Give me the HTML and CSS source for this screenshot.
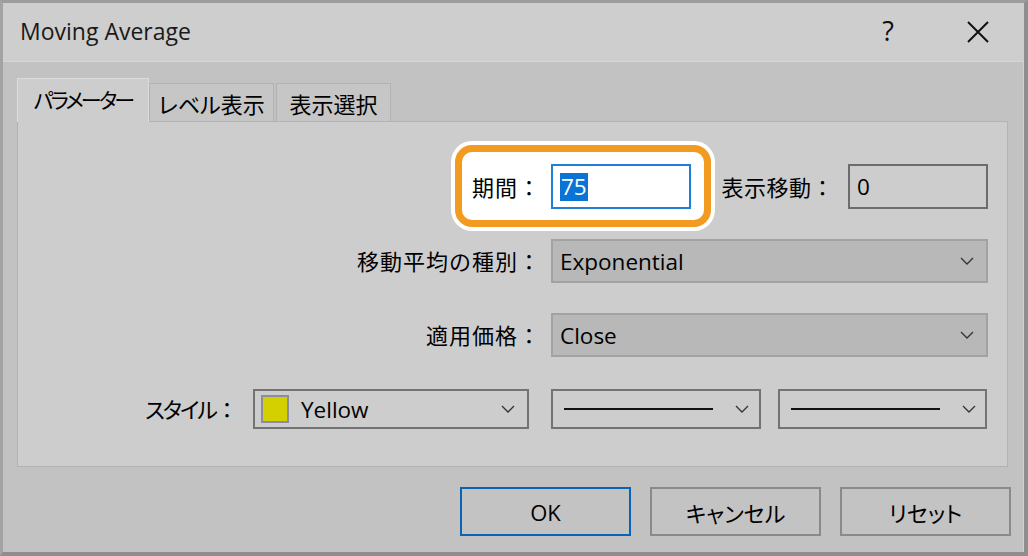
FILE: index.html
```html
<!DOCTYPE html>
<html lang="ja">
<head>
<meta charset="utf-8">
<title>Moving Average</title>
<link rel="stylesheet" href="styles.css">
</head>
<body>
<div class="window">
  <div class="titlebar">
    <div class="title">Moving Average</div>
    <div class="title-btns">
      <span class="help">?</span>
      <svg class="close" width="24" height="24" viewBox="0 0 24 24"><path d="M2 2 L22 22 M22 2 L2 22" stroke="#111" stroke-width="2" fill="none"/></svg>
    </div>
  </div>
  <div class="client">
    <div class="tabs">
      <div class="tab active">パラメーター</div>
      <div class="tab">レベル表示</div>
      <div class="tab">表示選択</div>
    </div>
    <div class="panel">
      <div class="highlight"></div>
      <div class="grid">
        <div class="label">期間：</div>
        <div class="ctrl-row">
          <div class="input focus"><span class="sel">75</span></div>
          <div class="label shift">表示移動：</div>
          <div class="input plain">0</div>
        </div>
        <div class="label">移動平均の種別：</div>
        <div class="combo">
          <span>Exponential</span>
          <svg class="chev" width="14" height="8" viewBox="0 0 14 8"><path d="M1 1 L7 7 L13 1" stroke="#333" stroke-width="1.3" fill="none"/></svg>
        </div>
        <div class="label">適用価格：</div>
        <div class="combo">
          <span>Close</span>
          <svg class="chev" width="14" height="8" viewBox="0 0 14 8"><path d="M1 1 L7 7 L13 1" stroke="#333" stroke-width="1.3" fill="none"/></svg>
        </div>
      </div>
      <div class="style-row">
        <div class="label"><span class="kana">スタイル</span>：</div>
        <div class="box color">
          <span class="swatch"></span>
          <span class="cname">Yellow</span>
          <svg class="chev" width="14" height="8" viewBox="0 0 14 8"><path d="M1 1 L7 7 L13 1" stroke="#333" stroke-width="1.3" fill="none"/></svg>
        </div>
        <div class="box line">
          <span class="stroke"></span>
          <svg class="chev" width="14" height="8" viewBox="0 0 14 8"><path d="M1 1 L7 7 L13 1" stroke="#333" stroke-width="1.3" fill="none"/></svg>
        </div>
        <div class="box line w">
          <span class="stroke"></span>
          <svg class="chev" width="14" height="8" viewBox="0 0 14 8"><path d="M1 1 L7 7 L13 1" stroke="#333" stroke-width="1.3" fill="none"/></svg>
        </div>
      </div>
    </div>
    <div class="buttons">
      <div class="btn default">OK</div>
      <div class="btn">キャンセル</div>
      <div class="btn">リセット</div>
    </div>
  </div>
</div>
</body>
</html>
```

FILE: styles.css
```css
* { box-sizing: border-box; }
html, body { margin: 0; padding: 0; }
body {
  width: 1028px;
  height: 556px;
  overflow: hidden;
  font-family: "Open Sans", "Noto Sans CJK JP", sans-serif;
  color: #000;
}
.window {
  width: 1028px;
  height: 556px;
  border-style: solid;
  border-color: #9c9c9c #8e8e8e #8e8e8e #a3a3a3;
  border-width: 3px 4px 4px 3px;
  background: #c2c2c2;
  display: flex;
  flex-direction: column;
}
.titlebar {
  height: 59px;
  background: #cecece;
  display: flex;
  align-items: center;
  justify-content: space-between;
  padding: 0 34px 0 17px;
  border-bottom: 1px solid #d6d6d6;
}
.title {
  font-size: 23px;
  color: #1a1a1a;
  padding-bottom: 2px;
}
.title-btns {
  display: flex;
  align-items: center;
  gap: 72px;
}
.help {
  font-size: 27px;
  font-family: "Open Sans", sans-serif;
  color: #111;
  padding-bottom: 4px;
}
.close { display: block; }
.client {
  flex: 1;
  padding: 16px 12px 15px 14px;
  display: flex;
  flex-direction: column;
  border-right: 1px solid #d2d2d2;
}
.tabs {
  display: flex;
  align-items: flex-end;
  height: 43px;
  position: relative;
  z-index: 2;
}
.tab {
  height: 38px;
  padding: 0;
  font-size: 22px;
  font-feature-settings: "palt";
  white-space: nowrap;
  display: flex;
  align-items: center;
  justify-content: center;
  background: #c6c6c6;
  border: 1px solid #b2b2b2;
  border-bottom: none;
  margin-right: 2px;
}
.tab:nth-child(2) { width: 125px; margin-right: 2px; }
.tab:nth-child(3) { width: 115px; }
.tab.active {
  width: 132px;
  height: 44px;
  margin-bottom: -1px;
  margin-right: 0;
  background: #cdcdcd;
  border-color: #dcdcdc;
  padding-bottom: 4px;
  font-size: 21px;
  letter-spacing: -2.8px;
}
.panel {
  width: 991px;
  height: 346px;
  background: #cdcdcd;
  border: 1px solid #b3b3b3;
  position: relative;
  padding: 42px 19px 0 0;
}
.highlight {
  position: absolute;
  left: 437px;
  top: 23px;
  width: 256px;
  height: 82px;
  background: #fff;
  border: 7px solid #f39b20;
  border-radius: 17px;
  box-shadow: 0 0 0 4px #fff;
  z-index: 0;
}
.grid {
  position: relative;
  z-index: 1;
  display: grid;
  grid-template-columns: 1fr 437px;
  grid-template-rows: 45px 44px 44px;
  column-gap: 10px;
  row-gap: 30px;
  align-items: center;
}
.label {
  font-size: 22px;
  letter-spacing: 1px;
  text-align: right;
  white-space: nowrap;
  line-height: 1;
}
.kana {
  font-feature-settings: "palt";
  letter-spacing: -2px;
}
.ctrl-row {
  display: flex;
  align-items: center;
  height: 45px;
}
.input {
  width: 140px;
  height: 45px;
  display: flex;
  align-items: center;
  padding-left: 7px;
  font-size: 22.5px;
}
.input.focus {
  background: #fff;
  border: 2px solid #1f7fd6;
}
.sel {
  background: #0a74d6;
  color: #fff;
  line-height: 28px;
  padding: 0 1px;
}
.input.plain {
  border: 2px solid #6c6c6c;
  background: #cdcdcd;
}
.label.shift {
  margin-left: auto;
  margin-right: 14px;
  letter-spacing: 0.5px;
}
.combo {
  height: 44px;
  background: #b8b8b8;
  border: 2px solid #a2a2a2;
  display: flex;
  align-items: center;
  justify-content: space-between;
  padding: 0 12px 0 7px;
  font-size: 22.5px;
}
.chev { display: block; flex: none; }
.style-row {
  position: relative;
  z-index: 1;
  display: flex;
  align-items: center;
  justify-content: flex-end;
  margin-top: 32px;
  height: 40px;
  padding-right: 1px;
}
.style-row .label { margin-right: 14px; }
.box {
  height: 40px;
  border: 2px solid #737373;
  background: #cdcdcd;
  display: flex;
  align-items: center;
  padding: 0 12px 0 6px;
}
.box.color { width: 276px; margin-right: 22px; }
.box.line { width: 210px; margin-right: 17px; padding-left: 11px; gap: 22px; }
.box.line.w { width: 209px; margin-right: 0; }
.swatch {
  width: 28px;
  height: 28px;
  background: #d4d000;
  border: 2px solid #8c8ca0;
  flex: none;
}
.cname {
  font-size: 22.5px;
  margin-left: 12px;
  flex: 1;
}
.stroke {
  height: 2px;
  background: #111;
  width: 149px;
  flex: none;
}
.buttons {
  display: flex;
  justify-content: flex-end;
  margin-top: 20px;
  gap: 19px;
}
.btn {
  width: 171px;
  height: 49px;
  border: 2px solid #8a8a8a;
  background: #c3c3c3;
  display: flex;
  align-items: center;
  justify-content: center;
  font-size: 22px;
  font-feature-settings: "palt";
}
.btn.default { border-color: #0a63b5; }
```
